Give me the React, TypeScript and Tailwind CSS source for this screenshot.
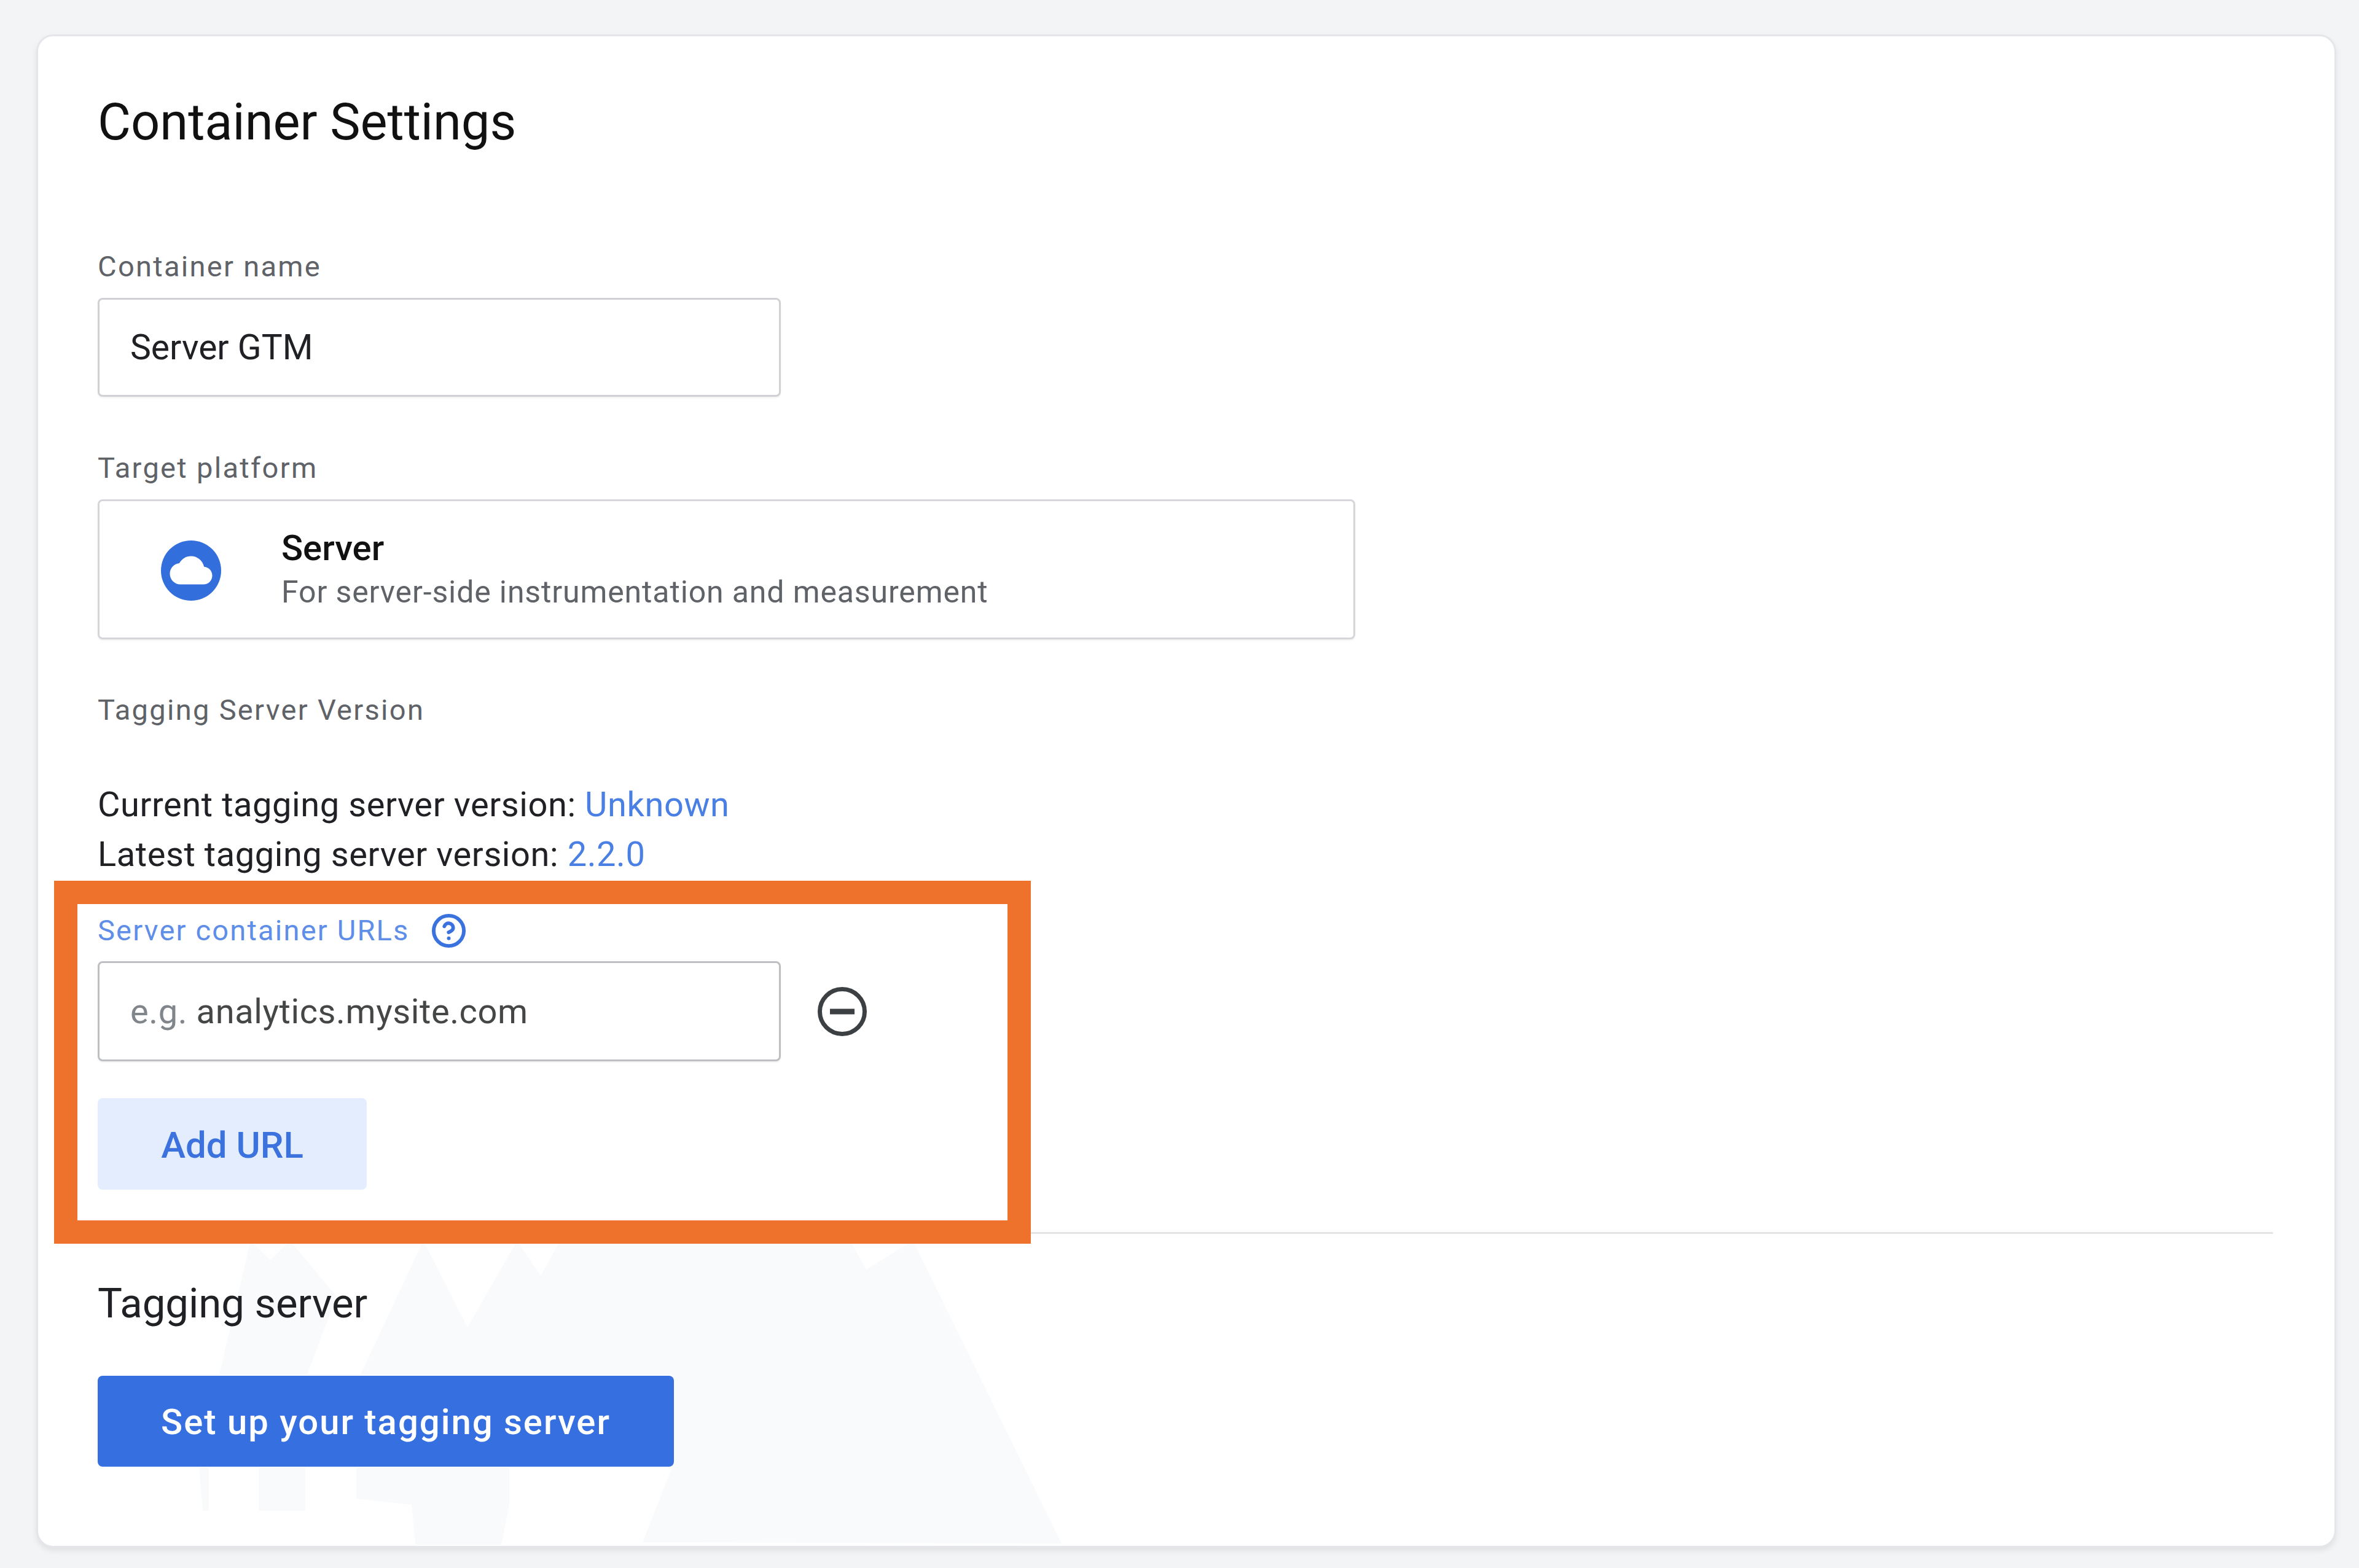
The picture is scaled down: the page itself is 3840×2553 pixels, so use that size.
import { CircleHelp } from "lucide-react";

function FieldLabel({ children, className = "" }: { children: React.ReactNode; className?: string }) {
  return <div className={`h-[60px] leading-[60px] text-[47px] tracking-[2.3px] text-[#5f6368] ${className}`}>{children}</div>;
}

function Mountains() {
  return (
    <svg className="absolute left-[-3px] top-[-3px] w-[3744px] h-[2464px]" viewBox="59 56 3744 2464" fill="#f9fafc">
      <polygon points="357,2238 408,2020 440,2052 472,2020 548,2111 500,2238" />
      <polygon points="587,2238 689,2020 761,2161 842,2020 880,2077 912,2020 1384,2020 1410,2067 1486,2020 1728,2513 1046,2511 1094,2389 1094,2238" />
      <polygon points="421,2389 497,2389 497,2460 421,2460" />
      <polygon points="580,2389 829,2389 829,2450 816,2515 676,2515 670,2450 580,2440" />
      <polygon points="324,2389 340,2389 340,2460 330,2460" />
    </svg>
  );
}

export default function App() {
  return (
    <div className="w-[3840px] h-[2553px] bg-[#f3f4f6] pl-[59px] pt-[56px] font-['Roboto',sans-serif] overflow-hidden">
      <div className="relative w-[3744px] h-[2464px] bg-white rounded-[28px] border-[3px] border-[#e4e6e9] shadow-[0_5px_8px_rgba(60,64,67,0.10)] pl-[97px] pr-[100px] pt-[90px]">
        <Mountains />
        <div className="relative">
          <h1 className="h-[100px] leading-[100px] text-[83px] font-normal text-[#111111]">Container Settings</h1>

          <FieldLabel className="mt-[155px]">Container name</FieldLabel>
          <div className="mt-[21px] w-[1112px] h-[161px] flex items-center pl-[50px] border-[3px] border-[#cfd1d4] rounded-[8px] bg-white shadow-[0_2px_3px_rgba(0,0,0,0.06)] text-[57px] text-[#202124]">
            Server GTM
          </div>

          <FieldLabel className="mt-[86px]">Target platform</FieldLabel>
          <div className="mt-[21px] w-[2047px] h-[228px] flex items-center border-[3px] border-[#d4d6d9] rounded-[8px] bg-white shadow-[0_2px_3px_rgba(0,0,0,0.06)]">
            <svg className="ml-[100px] mt-[3px] w-[98px] h-[98px] shrink-0" viewBox="0 0 98 98">
              <circle cx="49" cy="49" r="49" fill="#326fdd" />
              <path
                transform="translate(14.5 14) scale(2.875)"
                fill="#ffffff"
                d="M19.35 10.04C18.67 6.59 15.64 4 12 4 9.11 4 6.6 5.64 5.35 8.04 2.34 8.36 0 10.91 0 14c0 3.31 2.69 6 6 6h13c2.76 0 5-2.24 5-5 0-2.64-2.05-4.78-4.65-4.96z"
              />
            </svg>
            <div className="ml-[98px]">
              <div className="h-[66px] leading-[66px] text-[58px] font-medium text-[#111111]">Server</div>
              <div className="mt-[8px] h-[62px] leading-[62px] text-[50px] tracking-[0.87px] text-[#5f6368]">
                For server-side instrumentation and measurement
              </div>
            </div>
          </div>

          <FieldLabel className="mt-[85px]">Tagging Server Version</FieldLabel>

          <div className="mt-[84px] text-[56px] leading-[81px] tracking-[0.57px] text-[#202124]">
            <div>Current tagging server version: <span className="text-[#4a80e4]">Unknown</span></div>
            <div>Latest tagging server version: <span className="text-[#4a80e4]">2.2.0</span></div>
          </div>

          <div className="relative z-10 mt-[2px] -ml-[71px] w-[1590px] h-[591px] border-[38px] border-[#ee722c] bg-white pl-[33px] pt-[13px]">
            <div className="flex items-center h-[60px]">
              <span className="text-[47px] tracking-[2.2px] text-[#5f8ee8]">Server container URLs</span>
              <CircleHelp className="ml-[34px] w-[59px] h-[59px] text-[#3b73de]" strokeWidth={2.4} />
            </div>
            <div className="mt-[20px] flex items-center">
              <div className="w-[1112px] h-[163px] flex items-center pl-[50px] border-[3px] border-[#bdbfc2] rounded-[8px] bg-white shadow-[0_2px_3px_rgba(0,0,0,0.06)] text-[56px] tracking-[0.6px] text-[#444746]">
                <span className="text-[#80868b]">e.g.</span>&nbsp;analytics.mysite.com
              </div>
              <svg className="ml-[60px] w-[80px] h-[80px]" viewBox="0 0 80 80">
                <circle cx="40" cy="40" r="36.5" fill="none" stroke="#3c4043" strokeWidth="7" />
                <rect x="20" y="35.5" width="40" height="9" fill="#3c4043" />
              </svg>
            </div>
            <button className="mt-[60px] block w-[438px] h-[149px] pt-[4px] rounded-[8px] bg-[#e3edfd] text-[60px] font-medium text-[#3b72de]">
              Add URL
            </button>
          </div>

          <div className="-mt-[19px] h-[3px] bg-[#e3e4e6]" />

          <h2 className="mt-[68px] h-[90px] leading-[90px] text-[67px] font-normal text-[#202124]">Tagging server</h2>
          <button className="relative mt-[73px] block w-[938px] h-[148px] pt-[3px] rounded-[8px] bg-[#3670e0] text-[58px] font-medium tracking-[2px] text-white">
            Set up your tagging server
          </button>
        </div>
      </div>
    </div>
  );
}
